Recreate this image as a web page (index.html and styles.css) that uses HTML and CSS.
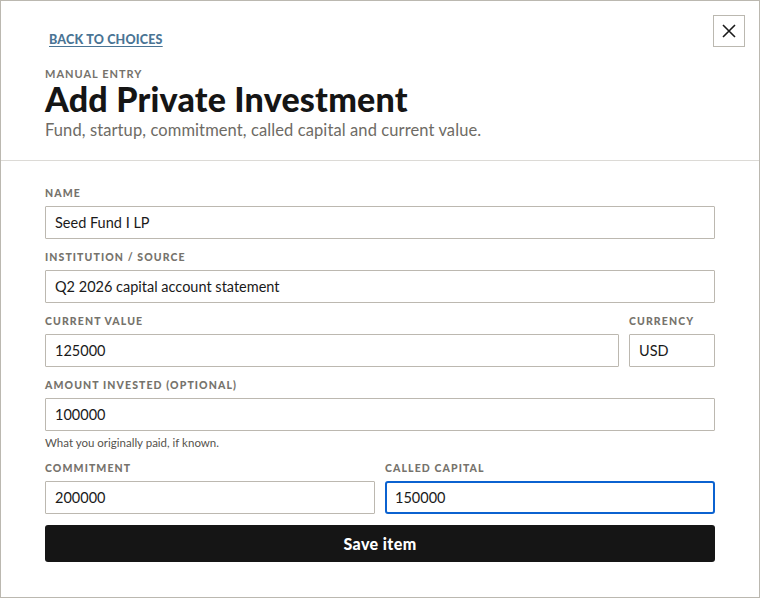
FILE: index.html
```html
<!DOCTYPE html>
<html lang="en">

<head>
  <meta charset="UTF-8">
  <meta name="viewport" content="width=device-width, initial-scale=1.0">
  <title>Add Private Investment</title>
  <link rel="stylesheet" href="styles.css">
</head>

<body>
  <div class="modal">
    <button class="close" aria-label="Close">
      <svg width="14" height="14" viewBox="0 0 14 14">
        <path d="M1 1 L13 13 M13 1 L1 13" stroke="#1a1a1a" stroke-width="1.6" fill="none" />
      </svg>
    </button>

    <header class="modal-head">
      <a href="#" class="back">Back to choices</a>
      <p class="eyebrow">Manual entry</p>
      <h1>Add Private Investment</h1>
      <p class="lede">Fund, startup, commitment, called capital and current value.</p>
    </header>

    <form class="entry">
      <div class="field">
        <label for="name">Name</label>
        <input id="name" type="text" value="Seed Fund I LP">
      </div>
      <div class="field">
        <label for="source">Institution / Source</label>
        <input id="source" type="text" value="Q2 2026 capital account statement">
      </div>
      <div class="row row-value">
        <div class="field">
          <label for="value">Current value</label>
          <input id="value" type="text" value="125000">
        </div>
        <div class="field">
          <label for="currency">Currency</label>
          <input id="currency" type="text" value="USD">
        </div>
      </div>
      <div class="field">
        <label for="invested">Amount invested (optional)</label>
        <input id="invested" type="text" value="100000">
        <small class="hint">What you originally paid, if known.</small>
      </div>
      <div class="row row-half">
        <div class="field">
          <label for="commitment">Commitment</label>
          <input id="commitment" type="text" value="200000">
        </div>
        <div class="field">
          <label for="called">Called capital</label>
          <input id="called" class="focused" type="text" value="150000">
        </div>
      </div>
      <button type="submit" class="save">Save item</button>
    </form>
  </div>
</body>

</html>
```

FILE: styles.css
```css
* {
  margin: 0;
  padding: 0;
  box-sizing: border-box;
}

body {
  font-family: Lato, "Noto Sans", sans-serif;
  color: #151515;
  background: #fff;
}

.modal {
  position: relative;
  height: 100vh;
  border: 1px solid #bbb8b0;
  background: #fff;
}

.close {
  position: absolute;
  top: 14px;
  right: 14px;
  width: 32px;
  height: 32px;
  display: flex;
  align-items: center;
  justify-content: center;
  background: #fff;
  border: 1px solid #bbb8b0;
  cursor: pointer;
}

.modal-head {
  padding: 27px 44px 20px;
  border-bottom: 1px solid #dcdad6;
}

.back {
  display: inline-block;
  margin-left: 4px;
  font-size: 12.5px;
  line-height: 16px;
  font-weight: 900;
  letter-spacing: 0.2px;
  text-transform: uppercase;
  color: #4a7494;
  text-decoration: underline;
  text-underline-offset: 2px;
}

.eyebrow {
  margin-top: 19px;
  font-size: 11px;
  line-height: 13px;
  font-weight: 700;
  letter-spacing: 1px;
  text-transform: uppercase;
  color: #75726b;
}

h1 {
  margin-top: 2px;
  font-size: 34px;
  line-height: 34px;
  font-weight: 900;
  letter-spacing: 0.2px;
  color: #151515;
}

.lede {
  margin-top: 4px;
  font-size: 16.5px;
  line-height: 20px;
  letter-spacing: 0.1px;
  color: #6e6b65;
}

.entry {
  padding: 26px 44px 0;
  display: flex;
  flex-direction: column;
  gap: 12px;
}

.field {
  display: flex;
  flex-direction: column;
}

label {
  font-size: 10.5px;
  line-height: 12px;
  font-weight: 900;
  letter-spacing: 1.1px;
  text-transform: uppercase;
  color: #76736c;
  margin-bottom: 7px;
}

input {
  height: 33px;
  padding: 0 9px;
  border: 1px solid #bcb8b0;
  border-radius: 1px;
  font-family: Lato, "Noto Sans", sans-serif;
  font-size: 14.5px;
  color: #1a1a1a;
  background: #fff;
  outline: none;
}

input.focused {
  border: 2px solid #0b62d0;
  border-radius: 3px;
  padding: 0 8px;
}

.hint {
  margin-top: 5px;
  font-size: 11.5px;
  line-height: 14px;
  color: #55524d;
}

.row {
  display: grid;
  gap: 10px;
}

.row-value {
  grid-template-columns: 1fr 86px;
}

.row-half {
  grid-template-columns: 1fr 1fr;
}

.save {
  margin-top: -1px;
  height: 37px;
  border: none;
  border-radius: 3px;
  background: #151515;
  color: #fff;
  font-family: Lato, "Noto Sans", sans-serif;
  font-size: 16px;
  font-weight: 900;
  letter-spacing: 0.4px;
  cursor: pointer;
}
```
